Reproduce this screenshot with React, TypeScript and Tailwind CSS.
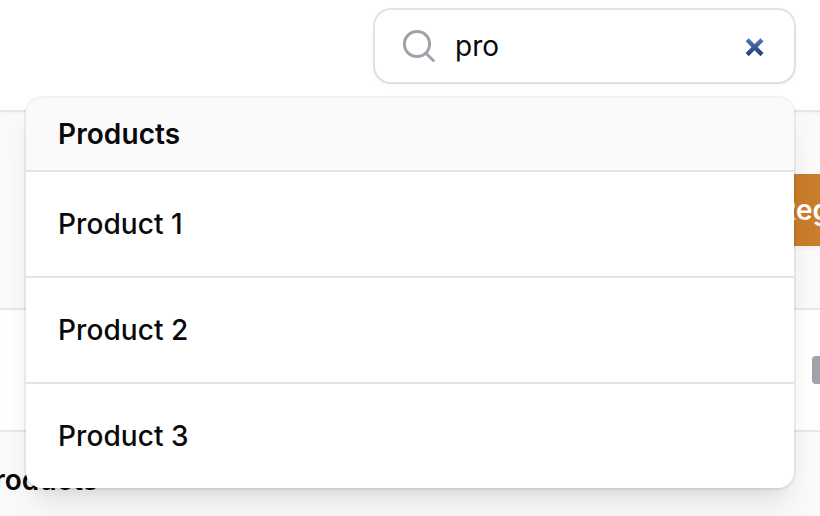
const results = ["Product 1", "Product 2", "Product 3"];

function SearchField() {
  return (
    <div className="mt-[10px] ml-[375px] flex h-[72px] w-[419px] items-center rounded-2xl bg-white pr-[29px] pl-[27px] shadow-[0_0_0_2px_rgba(9,9,11,0.1),0_2px_4px_2px_rgba(0,0,0,0.03)]">
      <svg className="h-10 w-9 shrink-0" viewBox="0 0 36 40" fill="none" stroke="#a1a1aa" strokeWidth="3" strokeLinecap="round">
        <circle cx="15" cy="18" r="12.6" />
        <path d="M24 27.2 31.3 34.5" />
      </svg>
      <span className="ml-[17px] grow text-[28px] leading-[48px]">pro</span>
      <svg className="h-5 w-5 shrink-0" viewBox="0 0 20 20" fill="none">
        <defs>
          <linearGradient id="clear" gradientUnits="userSpaceOnUse" x1="0" y1="2" x2="0" y2="20">
            <stop stopColor="#4f7bc5" />
            <stop offset="1" stopColor="#26396f" />
          </linearGradient>
        </defs>
        <path d="M2.2 3.8 17 18.6M17 3.8 2.2 18.6" stroke="url(#clear)" strokeWidth="4.4" strokeLinecap="butt" />
      </svg>
    </div>
  );
}

function ResultsMenu() {
  return (
    <div className="absolute top-[98px] left-[26px] w-[768px] overflow-hidden rounded-2xl bg-white shadow-[0_0_0_2px_rgba(9,9,11,0.05),0_20px_30px_-6px_rgba(0,0,0,0.1),0_8px_12px_-8px_rgba(0,0,0,0.1)]">
      <h3 className="h-[74px] border-b-2 border-[#e4e4e5] bg-[#fafafa] px-8 text-[28px] leading-[72px] font-semibold tracking-[0.08px]">Products</h3>
      <ul className="divide-y-2 divide-[#e4e4e5]">
        {results.map((name) => (
          <li key={name} className="box-content h-[104px] px-8 text-[28px] leading-[104px] font-medium tracking-[0.08px]">{name}</li>
        ))}
      </ul>
    </div>
  );
}

export default function App() {
  return (
    <div className="relative flex h-[516px] w-[820px] flex-col overflow-hidden bg-[#fafafa] font-['Inter',sans-serif] text-[#09090b]">
      <header className="relative h-[110px] shrink-0 bg-white shadow-[0_0_0_2px_rgba(9,9,11,0.05),0_2px_4px_2px_rgba(0,0,0,0.03)]">
        <div className="flex">
          <SearchField />
        </div>
      </header>
      <section className="flex h-[198px] shrink-0 justify-end pt-16">
        <div className="h-[72px] w-[60px] shrink-0 overflow-hidden bg-[#ca7d2a] pl-[18px] text-[28px] leading-[72px] font-semibold text-white shadow-[0_2px_4px_rgba(0,0,0,0.05)]">Reg</div>
      </section>
      <section className="flex h-[124px] shrink-0 items-center justify-end border-y-2 border-[#e8e8e9] bg-white">
        <div className="h-7 w-2 rounded-l bg-[#a1a1aa]" />
      </section>
      <section className="-ml-[24px] h-[84px] pt-[24px] text-[28px] leading-[48px] font-semibold tracking-[0.08px]">Products</section>
      <ResultsMenu />
    </div>
  );
}
